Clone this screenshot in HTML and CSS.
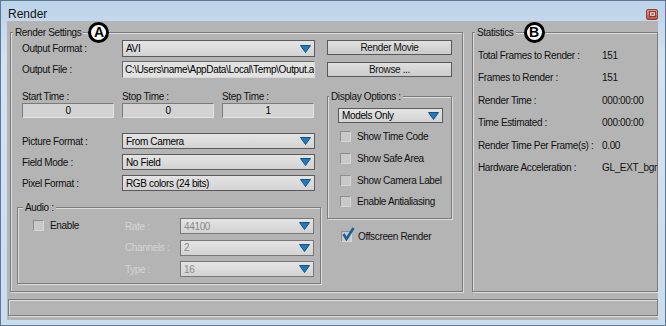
FILE: index.html
```html
<!DOCTYPE html>
<html>
	<head>
		<meta charset="utf-8">
		<link rel="stylesheet" href="styles.css">
	</head>
	<body>
		<div class="window">
			<div class="titlebar">
				<span class="title">Render</span>
				<span class="close">
					<svg width="7" height="6" viewBox="0 0 7 6"><rect x="0.5" y="0.5" width="6" height="5" fill="#f3d9d5" stroke="#8c3b31"/><path d="M2 1.5 L5 4.5 M5 1.5 L2 4.5" stroke="#8c3b31" stroke-width="1"/></svg>
				</span>
			</div>
			<div class="client">
				<div class="panels">
					<fieldset class="group render-settings">
						<legend>Render Settings<span class="callout callout-a">A</span></legend>
						<div class="settings">
							<div class="settings-main">
								<div class="field-row">
									<label>Output Format :</label>
									<div class="combo wide"><span>AVI</span><svg class="arrow" width="11" height="8" viewBox="0 0 11 8"><path d="M0.5 0.5 H10.5 L5.5 7.5 Z" fill="#1f7bbf" stroke="#16527e"/></svg></div>
								</div>
								<div class="field-row second">
									<label>Output File :</label>
									<div class="textbox wide">C:\Users\name\AppData\Local\Temp\Output.avi</div>
								</div>
								<div class="times">
									<div class="time">
										<label>Start Time :</label>
										<div class="spin">0</div>
									</div>
									<div class="time">
										<label>Stop Time :</label>
										<div class="spin">0</div>
									</div>
									<div class="time">
										<label>Step Time :</label>
										<div class="spin">1</div>
									</div>
								</div>
								<div class="formats">
									<div class="field-row">
										<label>Picture Format :</label>
										<div class="combo wide"><span>From Camera</span><svg class="arrow" width="11" height="8" viewBox="0 0 11 8"><path d="M0.5 0.5 H10.5 L5.5 7.5 Z" fill="#1f7bbf" stroke="#16527e"/></svg></div>
									</div>
									<div class="field-row">
										<label>Field Mode :</label>
										<div class="combo wide"><span>No Field</span><svg class="arrow" width="11" height="8" viewBox="0 0 11 8"><path d="M0.5 0.5 H10.5 L5.5 7.5 Z" fill="#1f7bbf" stroke="#16527e"/></svg></div>
									</div>
									<div class="field-row">
										<label>Pixel Format :</label>
										<div class="combo wide"><span>RGB colors (24 bits)</span><svg class="arrow" width="11" height="8" viewBox="0 0 11 8"><path d="M0.5 0.5 H10.5 L5.5 7.5 Z" fill="#1f7bbf" stroke="#16527e"/></svg></div>
									</div>
								</div>
								<fieldset class="group audio">
									<legend>Audio :</legend>
									<div class="audio-body">
										<label class="check enable"><span class="box"></span>Enable</label>
										<span class="muted">Rate :</span>
										<div class="combo disabled"><span>44100</span><svg class="arrow" width="11" height="8" viewBox="0 0 11 8"><path d="M0.5 0.5 H10.5 L5.5 7.5 Z" fill="#1f7bbf" stroke="#16527e"/></svg></div>
										<span class="muted">Channels :</span>
										<div class="combo disabled"><span>2</span><svg class="arrow" width="11" height="8" viewBox="0 0 11 8"><path d="M0.5 0.5 H10.5 L5.5 7.5 Z" fill="#1f7bbf" stroke="#16527e"/></svg></div>
										<span class="muted">Type :</span>
										<div class="combo disabled"><span>16</span><svg class="arrow" width="11" height="8" viewBox="0 0 11 8"><path d="M0.5 0.5 H10.5 L5.5 7.5 Z" fill="#1f7bbf" stroke="#16527e"/></svg></div>
									</div>
								</fieldset>
							</div>
							<div class="settings-side">
								<div class="button">Render Movie</div>
								<div class="button browse">Browse ...</div>
								<fieldset class="group display-options">
									<legend>Display Options :</legend>
									<div class="display-body">
										<div class="combo models"><span>Models Only</span><svg class="arrow" width="11" height="8" viewBox="0 0 11 8"><path d="M0.5 0.5 H10.5 L5.5 7.5 Z" fill="#1f7bbf" stroke="#16527e"/></svg></div>
										<label class="check"><span class="box"></span>Show Time Code</label>
										<label class="check"><span class="box"></span>Show Safe Area</label>
										<label class="check"><span class="box"></span>Show Camera Label</label>
										<label class="check"><span class="box"></span>Enable Antialiasing</label>
									</div>
								</fieldset>
								<label class="check offscreen"><span class="box checked"><svg class="tick" width="13" height="14" viewBox="0 0 13 14"><path d="M1.5 7 L4.5 12 L11.5 1" fill="none" stroke="#1c5f99" stroke-width="2.6"/></svg></span>Offscreen Render</label>
							</div>
						</div>
					</fieldset>
					<fieldset class="group statistics">
						<legend>Statistics<span class="callout">B</span></legend>
						<div class="stats">
							<span>Total Frames to Render :</span><span>151</span>
							<span>Frames to Render :</span><span>151</span>
							<span>Render Time :</span><span>000:00:00</span>
							<span>Time Estimated :</span><span>000:00:00</span>
							<span>Render Time Per Frame(s) :</span><span>0.00</span>
							<span>Hardware Acceleration :</span><span>GL_EXT_bgr</span>
						</div>
					</fieldset>
				</div>
				<div class="statusbar"></div>
			</div>
		</div>
	</body>
</html>
```

FILE: styles.css
```css
html, body{
	margin: 0;
}
body{
	font-family: "Liberation Sans", Arial, sans-serif;
	font-size: 10px;
	letter-spacing: -0.35px;
	color: #111;
	background: #c8dcef;
}
.window{
	width: 666px;
	height: 326px;
	box-sizing: border-box;
	border: 1px solid #5f7893;
	background: linear-gradient(#bcd3ea, #d2e3f3 60px, #c9ddef);
	padding: 0 7px 5px 6px;
	display: flex;
	flex-direction: column;
}
.titlebar{
	height: 20px;
	box-sizing: border-box;
	padding-top: 6px;
	display: flex;
	align-items: center;
	justify-content: space-between;
	flex: none;
}
.title{
	font-size: 12px;
	letter-spacing: 0;
	color: #141414;
	padding-left: 1px;
}
.close{
	width: 12px;
	height: 11px;
	box-sizing: border-box;
	border: 1px solid #8a4138;
	border-radius: 2px;
	background: linear-gradient(#e19a90, #bd5446);
	display: flex;
	align-items: center;
	justify-content: center;
}
.close svg{
	display: block;
}
.client{
	flex: 1;
	background: #b4b4b4;
	padding: 5px 0 4px 0;
	box-sizing: border-box;
	display: flex;
	flex-direction: column;
}
.panels{
	display: flex;
	gap: 9px;
	padding-left: 3px;
	height: 266px;
	flex: none;
}

/* etched group boxes */
.group{
	margin: 0;
	padding: 0;
	min-width: 0;
	box-sizing: border-box;
	border: 1px solid #7b7b7b;
	box-shadow: inset 1px 1px 0 #dcdcdc, 1px 1px 0 #dcdcdc;
}
.group legend{
	position: relative;
	margin-left: 2px;
	padding: 0 2px;
	line-height: 13px;
	background: #b4b4b4;
}
.callout{
	position: absolute;
	left: calc(100% + 8px);
	top: -4px;
	width: 21px;
	height: 21px;
	box-sizing: border-box;
	border: 3px solid #000;
	border-radius: 50%;
	background: #fff;
	color: #000;
	font-weight: bold;
	font-size: 14px;
	letter-spacing: 0;
	line-height: 15px;
	text-align: center;
}
.callout-a{
	left: calc(100% + 5px);
}
.render-settings{
	width: 453px;
	height: 266px;
}
.statistics{
	width: 186px;
	height: 266px;
}
.settings{
	display: flex;
	gap: 12px;
	padding: 1px 10px 0 11px;
}
.settings-main{
	width: 293px;
	display: flex;
	flex-direction: column;
}
.settings-side{
	width: 125px;
	display: flex;
	flex-direction: column;
}

/* rows and controls */
.field-row{
	display: flex;
	align-items: center;
	height: 17px;
}
.field-row label{
	width: 100px;
}
.field-row.second{
	margin-top: 4px;
}
.wide{
	width: 193px;
	height: 100%;
}
.combo{
	box-sizing: border-box;
	display: flex;
	align-items: center;
	justify-content: space-between;
	border: 1px solid #5b5b5b;
	background: linear-gradient(#e4e4e4, #d3d3d3);
	padding: 0 3px 0 3px;
	color: #000;
	white-space: nowrap;
}
.combo .arrow{
	display: block;
	flex: none;
}
.combo.disabled{
	border-color: #777;
	color: #8a8a8a;
}
.textbox{
	box-sizing: border-box;
	border: 1px solid #6a6a6a;
	border-right-color: #d8d8d8;
	border-bottom-color: #d8d8d8;
	background: #e2e2e2;
	padding: 1px 0 0 2px;
	line-height: 14px;
	white-space: nowrap;
	overflow: hidden;
	color: #000;
}
.times{
	display: grid;
	grid-template-columns: 100px 100px 93px;
	margin-top: 12px;
}
.time label{
	display: block;
	line-height: 13px;
}
.spin{
	width: 92px;
	height: 15px;
	box-sizing: border-box;
	border: 1px solid #7a7a7a;
	border-right-color: #e2e2e2;
	border-bottom-color: #e2e2e2;
	background: #d3d3d3;
	text-align: center;
	line-height: 13px;
	color: #000;
}
.formats{
	display: flex;
	flex-direction: column;
	gap: 5px;
	margin-top: 15px;
}
.formats .field-row{
	height: 16px;
}
.audio{
	margin: 10px -6px 0 -5px;
}
.audio legend{
	margin-left: 5px;
}
.audio-body{
	display: grid;
	grid-template-columns: 92px 55px 134px;
	grid-auto-rows: 16px;
	row-gap: 5.5px;
	align-items: center;
	padding: 4px 6px 6px 15px;
}
.audio-body .enable{
	grid-row: 1;
	grid-column: 1;
	align-self: start;
	margin-top: 2px;
	height: 11px;
}
.audio-body .muted{
	grid-column: 2;
	color: #d4d4d4;
}
.audio-body .combo{
	grid-column: 3;
	height: 16px;
}
.audio-body .muted:nth-of-type(1){
	grid-row: 1;
}
.check{
	display: flex;
	align-items: center;
	gap: 6px;
	height: 22px;
	white-space: nowrap;
}
.box{
	position: relative;
	width: 11px;
	height: 11px;
	box-sizing: border-box;
	border: 1px solid #8e8e8e;
	border-right-color: #d6d6d6;
	border-bottom-color: #d6d6d6;
	background: #c9c9c9;
	flex: none;
}
.tick{
	position: absolute;
	left: 0;
	top: -5px;
}
.button{
	height: 15px;
	box-sizing: border-box;
	border: 1px solid #595959;
	background: linear-gradient(#e0e0e0, #cbcbcb);
	text-align: center;
	line-height: 13px;
	color: #111;
}
.browse{
	margin-top: 7px;
}
.display-options{
	margin-top: 13px;
	height: 129px;
}
.display-options legend{
	margin-left: 1px;
}
.display-body{
	padding: 5px 0 0 10px;
}
.models{
	width: 105px;
	height: 15px;
	margin-bottom: 3px;
}
.display-body .check{
	margin-left: 2px;
	height: 21.7px;
}
.offscreen{
	margin: 6px 0 0 14px;
}
.stats{
	display: grid;
	grid-template-columns: 124px auto;
	grid-auto-rows: 22.5px;
	align-items: center;
	padding: 5px 0 0 5px;
	white-space: nowrap;
}
.statusbar{
	margin: 7px 0 0 1px;
	height: 17px;
	box-sizing: border-box;
	border: 1px solid #7b7b7b;
	box-shadow: inset 1px 1px 0 #dcdcdc, 1px 1px 0 #dcdcdc;
}
```
